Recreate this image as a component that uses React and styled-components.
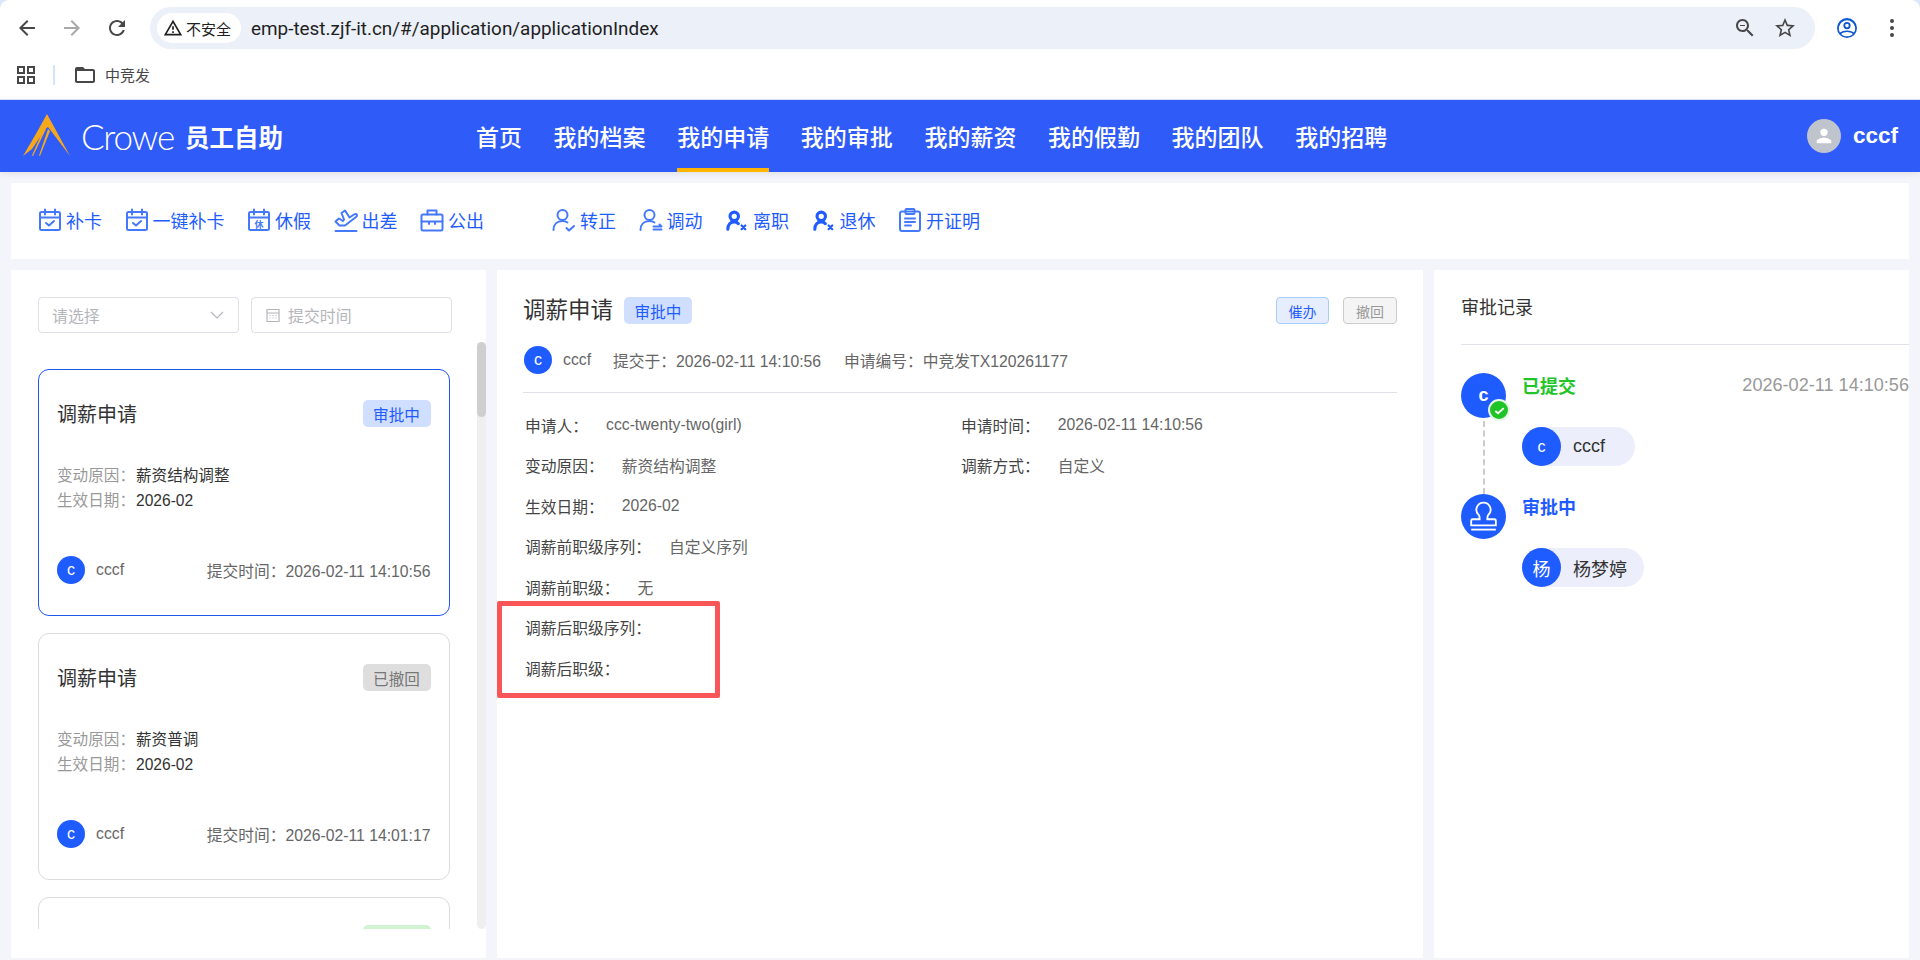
import React from 'react';
import styled, { createGlobalStyle } from 'styled-components';

const GlobalStyle = createGlobalStyle`
  html, body {
    margin: 0;
    padding: 0;
    background: #dde7fb;
  }
  body {
    font-family: "Liberation Sans", "Noto Sans CJK SC", sans-serif;
    color: #333;
  }
  * { box-sizing: border-box; }
`;

const BLUE = '#1f5cff';
const ICON_BLUE = '#4579fb';

const Page = styled.div`
  width: 1920px;
  height: 960px;
  overflow: hidden;
  display: flex;
  flex-direction: column;
`;

const BrowserBar = styled.div`
  height: 50px;
  padding-top: 6px;
  background: #fff;
  border-radius: 9px 9px 0 0;
  display: flex;
  align-items: center;
  flex-shrink: 0;
`;

const NavIcon = styled.span`
  width: 24px;
  height: 24px;
  margin-left: ${(p) => p.$ml}px;
  display: flex;
  color: ${(p) => p.$color || '#474747'};
  flex-shrink: 0;
  svg { width: 24px; height: 24px; fill: currentColor; }
`;

const Omnibox = styled.div`
  width: 1665px;
  height: 42px;
  margin-left: 21px;
  border-radius: 21px;
  background: #ebf0f9;
  display: flex;
  align-items: center;
  padding: 0 18px 0 7px;
`;

const SecurityChip = styled.div`
  width: 84px;
  height: 30px;
  border-radius: 15px;
  background: #fff;
  display: flex;
  align-items: center;
  padding-left: 6px;
  gap: 3px;
  font-size: 15px;
  color: #1f1f1f;
  svg { width: 20px; height: 20px; fill: #1f1f1f; }
`;

const UrlText = styled.div`
  margin-left: 10px;
  font-family: Roboto, "Liberation Sans", sans-serif;
  font-size: 18.9px;
  color: #1f1f1f;
  flex: 1;
`;

const BookmarkBar = styled.div`
  height: 50px;
  background: #fff;
  border-bottom: 1px solid #d9e2f4;
  display: flex;
  align-items: center;
  padding-left: 14px;
  flex-shrink: 0;
  font-size: 15px;
  color: #474747;
`;

const BarSeparator = styled.span`
  width: 2px;
  height: 20px;
  background: #d3e3fd;
  margin: 0 18px 0 15px;
`;

const BookmarkIcon = styled.span`
  display: flex;
  margin-right: 8px;
  svg { width: 24px; height: 24px; fill: #474747; }
`;

const Header = styled.header`
  height: 72px;
  background: #2f5bf8;
  display: flex;
  align-items: center;
  padding: 0 22px 0 23px;
  flex-shrink: 0;
  color: #fff;
  box-shadow: 0 2px 6px rgba(0, 0, 0, 0.08);
  position: relative;
`;

const Brand = styled.div`
  width: 453px;
  display: flex;
  align-items: center;
  svg { width: 47px; height: 42px; margin-top: -2px; }
`;

const BrandName = styled.span`
  font-family: Lato, "Open Sans", sans-serif;
  font-weight: 300;
  font-size: 35px;
  letter-spacing: -1.2px;
  margin-left: 11px;
  line-height: 1;
`;

const BrandTitle = styled.span`
  font-size: 24.5px;
  font-weight: 700;
  margin-left: 11px;
`;

const Nav = styled.nav`
  display: flex;
  gap: 31.6px;
  height: 100%;
`;

const NavItem = styled.a`
  height: 100%;
  display: flex;
  align-items: center;
  font-size: 23px;
  font-weight: 500;
  color: #fff;
  border-bottom: 4px solid ${(p) => (p.$active ? '#ffb400' : 'transparent')};
  padding-top: 4px;
`;

const UserBox = styled.div`
  margin-left: auto;
  display: flex;
  align-items: center;
  gap: 12px;
  font-size: 22.5px;
  font-weight: 700;
`;

const UserAvatar = styled.span`
  width: 34px;
  height: 34px;
  border-radius: 50%;
  background: #c0c4cc;
  display: flex;
  align-items: center;
  justify-content: center;
  svg { width: 22px; height: 22px; fill: #fff; }
`;

const Main = styled.main`
  flex: 1;
  min-height: 0;
  background: #f3f5fa;
  padding: 11px 11px 2px;
  display: flex;
  flex-direction: column;
  gap: 11px;
`;

const ActionBar = styled.div`
  height: 76px;
  padding-bottom: 2px;
  background: #fff;
  display: flex;
  align-items: center;
  padding-left: 28px;
  flex-shrink: 0;
`;

const ActionGroup = styled.div`
  display: flex;
  gap: 23.5px;
  margin-right: ${(p) => p.$mr || 0}px;
`;

const ActionItem = styled.a`
  display: flex;
  align-items: center;
  gap: 5px;
  font-size: 18px;
  color: ${BLUE};
  svg {
    width: 22px;
    height: 22px;
    overflow: visible;
    fill: none;
    stroke: ${ICON_BLUE};
    stroke-width: 2;
    stroke-linecap: round;
    stroke-linejoin: round;
  }
`;

const Columns = styled.div`
  flex: 1;
  min-height: 0;
  display: grid;
  grid-template-columns: 475px 926px 475px;
  gap: 11px;
`;

const ListPanel = styled.section`
  background: #fff;
  padding: 27px 0 0 27px;
  display: flex;
  flex-direction: column;
`;

const Filters = styled.div`
  display: flex;
  gap: 12px;
  width: 414px;
`;

const FilterBox = styled.div`
  width: 201px;
  height: 36px;
  border: 1px solid #dcdfe6;
  border-radius: 4px;
  display: flex;
  align-items: center;
  padding: 0 13px;
  font-size: 15.9px;
  color: #b5b6bc;
  gap: 7px;
  justify-content: ${(p) => (p.$between ? 'space-between' : 'flex-start')};
  svg {
    width: 16px;
    height: 16px;
    fill: none;
    stroke: #b5b6bc;
    stroke-width: 1.2;
    flex-shrink: 0;
  }
`;

const ListArea = styled.div`
  margin-top: 9px;
  height: 587px;
  display: flex;
`;

const CardList = styled.div`
  width: 412px;
  height: 100%;
  overflow: hidden;
  padding-top: 27px;
  display: flex;
  flex-direction: column;
  gap: 17px;
`;

const ScrollTrack = styled.div`
  width: 9px;
  height: 100%;
  margin-left: 27px;
  background: #efefef;
  border-radius: 5px;
`;

const ScrollThumb = styled.div`
  height: 75px;
  background: #cfcfcf;
  border-radius: 5px;
`;

const Card = styled.article`
  height: 247px;
  flex-shrink: 0;
  border: 1px solid ${(p) => (p.$active ? '#1f57ee' : '#dcdcdc')};
  border-radius: 11px;
  padding: ${(p) => (p.$tight ? 27 : 30)}px 18.5px 0 18px;
`;

const CardTop = styled.div`
  display: flex;
  align-items: center;
  justify-content: space-between;
  height: 27px;
`;

const CardTitle = styled.h3`
  margin: 0;
  font-size: 20px;
  font-weight: 400;
  color: #333;
`;

const tagColors = {
  blue: ['#d0deff', BLUE],
  gray: ['#dedede', '#777'],
  green: ['#d2f3d3', '#22c528'],
};

const Tag = styled.span`
  width: 68px;
  height: 27px;
  border-radius: 5px;
  background: ${(p) => tagColors[p.$tone][0]};
  color: ${(p) => tagColors[p.$tone][1]};
  font-size: 15.6px;
  display: flex;
  align-items: center;
  justify-content: center;
`;

const CardInfo = styled.div`
  margin-top: 37px;
  font-size: 15.6px;
  line-height: 24.5px;
`;

const InfoLine = styled.div`
  display: flex;
  color: #999;
  span { color: #333; margin-left: 1px; }
`;

const CardFooter = styled.div`
  margin-top: 43px;
  display: flex;
  align-items: center;
  font-size: 15.75px;
  color: #666;
`;

const Avatar = styled.span`
  width: ${(p) => p.$size || 28}px;
  height: ${(p) => p.$size || 28}px;
  border-radius: 50%;
  background: ${BLUE};
  color: #fff;
  font-size: ${(p) => p.$font || 14}px;
  font-weight: ${(p) => p.$weight || 400};
  display: flex;
  align-items: center;
  justify-content: center;
  flex-shrink: 0;
  position: relative;
`;

const FooterName = styled.span`
  margin-left: 11px;
`;

const FooterTime = styled.span`
  margin-left: auto;
`;

const DetailPanel = styled.section`
  background: #fff;
  padding: 27px 26px 0;
`;

const DetailTop = styled.div`
  display: flex;
  align-items: center;
  height: 27px;
  gap: 11px;
`;

const DetailTitle = styled.h2`
  margin: 0 0 6px;
  font-size: 22.5px;
  font-weight: 400;
  color: #333;
`;

const Actions = styled.div`
  margin-left: auto;
  display: flex;
  gap: 14px;
`;

const SmallButton = styled.button`
  width: ${(p) => (p.$primary ? 53 : 54)}px;
  height: 27px;
  padding: 0;
  border-radius: 4px;
  font-family: inherit;
  font-size: 14px;
  border: 1px solid ${(p) => (p.$primary ? '#a8ceff' : '#ccc')};
  background: ${(p) => (p.$primary ? '#e6edff' : '#f4f4f4')};
  color: ${(p) => (p.$primary ? BLUE : '#999')};
`;

const MetaRow = styled.div`
  margin-top: 22px;
  padding: 0 0 18px 1px;
  border-bottom: 1px solid #dfe1ea;
  display: flex;
  align-items: center;
  font-size: 15.75px;
  color: #666;
`;

const MetaName = styled.span`
  margin-left: 11px;
  margin-right: 22px;
`;

const MetaText = styled.span`
  margin-right: 23px;
`;

const FieldGrid = styled.div`
  margin-top: 12px;
  padding-left: 2px;
  display: grid;
  grid-template-columns: 436px 1fr;
`;

const Field = styled.div`
  height: 40.5px;
  display: flex;
  align-items: center;
  gap: 18px;
  font-size: 15.75px;
  color: #666;
  grid-column: ${(p) => (p.$wide ? '1 / -1' : 'auto')};
`;

const FieldLabel = styled.span`
  color: #444;
`;

const MarkedFields = styled.div`
  grid-column: 1 / -1;
  position: relative;
`;

const RedFrame = styled.div`
  position: absolute;
  left: -28px;
  top: -7px;
  width: 223px;
  height: 97px;
  border: 5px solid #f95757;
  border-radius: 2px;
`;

const RecordPanel = styled.section`
  background: #fff;
  padding-left: 27px;
`;

const RecordHead = styled.div`
  height: 75px;
  border-bottom: 1px solid #e2e2ea;
  display: flex;
  align-items: center;
  padding: 0 0 2px 0;
  font-size: 18px;
  color: #333;
`;

const Timeline = styled.div`
  padding-top: 28px;
`;

const Step = styled.div`
  display: flex;
  gap: 16px;
  min-height: 121px;
`;

const Marker = styled.div`
  width: 45px;
  display: flex;
  flex-direction: column;
  align-items: center;
  flex-shrink: 0;
`;

const DashLine = styled.div`
  flex: 1;
  margin-top: 3px;
  border-left: 2px dashed #ccc;
`;

const CheckBadge = styled.span`
  position: absolute;
  right: -4px;
  bottom: -3px;
  width: 22px;
  height: 22px;
  border-radius: 50%;
  background: #1fc427;
  border: 2px solid #e7f7e8;
  display: flex;
  align-items: center;
  justify-content: center;
  svg { width: 13px; height: 13px; fill: none; stroke: #fff; stroke-width: 2; }
`;

const StampIcon = styled.svg`
  width: 37px;
  height: 37px;
  flex-shrink: 0;
  fill: none;
  stroke: #fff;
  stroke-width: 1.2;
`;

const StepBody = styled.div`
  flex: 1;
  min-width: 0;
`;

const StepHead = styled.div`
  height: 24px;
  display: flex;
  align-items: center;
  justify-content: space-between;
  margin-bottom: 30px;
`;

const StepName = styled.span`
  font-size: 18px;
  font-weight: 700;
  color: ${(p) => p.$color};
`;

const StepTime = styled.span`
  font-size: 18.1px;
  color: #999;
`;

const PersonChip = styled.div`
  display: inline-flex;
  align-items: center;
  height: 39px;
  border-radius: 20px;
  background: #eceffb;
  padding-right: 17px;
`;

const PersonName = styled.span`
  margin-left: 12px;
  min-width: 45px;
  font-size: 18px;
  color: #333;
`;

const CalendarTop = () => (
  <>
    <rect x="2" y="4" width="20" height="18" rx="1.5" />
    <path d="M2 9.5h20M7 1.5v5M17 1.5v5" />
  </>
);

const icons = {
  check: (
    <svg viewBox="1 1 22 22">
      <CalendarTop />
      <path d="M8 15l3 2.5 5-4.5" />
    </svg>
  ),
  leave: (
    <svg viewBox="1 1 22 22">
      <CalendarTop />
      <text x="12" y="19.5" textAnchor="middle" fontSize="9" fontWeight="700" fill={ICON_BLUE} stroke="none">休</text>
    </svg>
  ),
  trip: (
    <svg viewBox="1 1 22 22">
      <path d="M1.5 13.5l3.5-3 4 2.5 1-1.5L7.5 5 11 2.5l4.5 7 4.5-3c2.5-1.5 4 1 2 2.5L11 17.5H5.5z" />
      <path d="M1.5 23h21" />
    </svg>
  ),
  case: (
    <svg viewBox="1 1 22 22">
      <rect x="1.5" y="6.5" width="21" height="16" rx="1.5" />
      <path d="M7.5 6.5V2.5h9v4M1.5 13.5h21M9 13.5v2.5M15 13.5v2.5" />
    </svg>
  ),
  userCheck: (
    <svg viewBox="1 1 22 22">
      <circle cx="10.5" cy="7" r="5" />
      <path d="M1.5 22c0-5.5 3.5-9 9-9 2 0 3.5.5 5 1.5M14.5 20l2.5 2.5 5-4.5" />
    </svg>
  ),
  userMove: (
    <svg viewBox="1 1 22 22">
      <circle cx="10.5" cy="7" r="5" />
      <path d="M1.5 22c0-5.5 3.5-9 9-9 2 0 3.5.5 5 1.5M14.5 18.5h8l-2-2M22.5 21.5h-8" />
    </svg>
  ),
  userOut: (
    <svg viewBox="1 0 24 24" style={{ strokeWidth: 3.4, stroke: '#1f5cff' }}>
      <circle cx="10" cy="8" r="4.6" />
      <path d="M3 22c0-5 3-8 7-8c2 0 3.5.8 4.5 2" />
      <path d="M18 18l4 4M22 18l-4 4" style={{ strokeWidth: 2.4 }} />
    </svg>
  ),
  clip: (
    <svg viewBox="1 1 22 22">
      <rect x="2" y="3.5" width="20" height="19.5" rx="2" />
      <rect x="7.5" y="1" width="9" height="5" rx="1" />
      <path d="M7 10.5h10M7 14h10M7 17.5h6" />
    </svg>
  ),
};

const leftActions = [
  ['check', '补卡'],
  ['check', '一键补卡'],
  ['leave', '休假'],
  ['trip', '出差'],
  ['case', '公出'],
];

const rightActions = [
  ['userCheck', '转正'],
  ['userMove', '调动'],
  ['userOut', '离职'],
  ['userOut', '退休'],
  ['clip', '开证明'],
];

const navItems = ['首页', '我的档案', '我的申请', '我的审批', '我的薪资', '我的假勤', '我的团队', '我的招聘'];

const applications = [
  { tag: '审批中', tone: 'blue', reason: '薪资结构调整', time: '2026-02-11 14:10:56', active: true },
  { tag: '已撤回', tone: 'gray', reason: '薪资普调', time: '2026-02-11 14:01:17' },
  { tag: '已通过', tone: 'green', reason: '薪资普调', time: '2026-02-11 13:52:08', tight: true },
];

const CroweLogo = () => (
  <svg viewBox="0 0 47 42">
    <path fill="#f5a81c" d="M24 0L47 42 28.5 17.5 25 13 22.5 15 9 35 0 42 14 18z" />
    <path fill="#f5a81c" d="M23 15L10 42l-1-.5L21 14z" />
    <path fill="#f5a81c" d="M27 17L17 42l-1-.5L25 15z" />
  </svg>
);

export default function App() {
  return (
    <Page>
      <GlobalStyle />
      <BrowserBar>
        <NavIcon $ml={15}>
          <svg viewBox="0 0 24 24"><path d="M20 11H7.83l5.59-5.59L12 4l-8 8 8 8 1.41-1.41L7.83 13H20v-2z" /></svg>
        </NavIcon>
        <NavIcon $ml={21} $color="#a8a8a8">
          <svg viewBox="0 0 24 24"><path d="M12 4l-1.41 1.41L16.17 11H4v2h12.17l-5.58 5.59L12 20l8-8z" /></svg>
        </NavIcon>
        <NavIcon $ml={21}>
          <svg viewBox="0 0 24 24"><path d="M17.65 6.35C16.2 4.9 14.21 4 12 4c-4.42 0-7.99 3.58-7.99 8s3.57 8 7.99 8c3.73 0 6.84-2.55 7.73-6h-2.08c-.82 2.33-3.04 4-5.65 4-3.31 0-6-2.69-6-6s2.69-6 6-6c1.66 0 3.14.69 4.22 1.78L13 11h7V4l-2.35 2.35z" /></svg>
        </NavIcon>
        <Omnibox>
          <SecurityChip>
            <svg viewBox="0 0 24 24"><path d="M1 21h22L12 2 1 21zm3.47-2L12 5.99 19.53 19H4.47zM11 16h2v2h-2zm0-6h2v4h-2z" /></svg>
            不安全
          </SecurityChip>
          <UrlText>emp-test.zjf-it.cn/#/application/applicationIndex</UrlText>
          <NavIcon $ml={0}>
            <svg viewBox="0 0 24 24"><path d="M15.5 14h-.79l-.28-.27C15.41 12.59 16 11.11 16 9.5 16 5.91 13.09 3 9.5 3S3 5.91 3 9.5 5.91 16 9.5 16c1.61 0 3.09-.59 4.23-1.57l.27.28v.79l5 4.99L20.49 19l-4.99-5zm-6 0C7.01 14 5 11.99 5 9.5S7.01 5 9.5 5 14 7.01 14 9.5 11.99 14 9.5 14zM7 9h5v1H7z" /></svg>
          </NavIcon>
          <NavIcon $ml={16}>
            <svg viewBox="0 0 24 24"><path d="M22 9.24l-7.19-.62L12 2 9.19 8.63 2 9.24l5.46 4.73L5.82 21 12 17.27 18.18 21l-1.63-7.03L22 9.24zM12 15.4l-3.76 2.27 1-4.28-3.32-2.88 4.38-.38L12 6.1l1.71 4.04 4.38.38-3.32 2.88 1 4.28L12 15.4z" /></svg>
          </NavIcon>
        </Omnibox>
        <NavIcon $ml={20} $color="#0b57d0">
          <svg viewBox="0 0 24 24"><path d="M12 2a10 10 0 1 0 0 20 10 10 0 0 0 0-20zm0 18.2c-2.3 0-4.4-.9-5.9-2.3 1.6-1.1 3.7-1.8 5.9-1.8s4.3.7 5.9 1.8c-1.5 1.4-3.6 2.3-5.9 2.3zm7.1-3.6c-1.9-1.4-4.4-2.2-7.1-2.2s-5.2.8-7.1 2.2A8.2 8.2 0 1 1 19.1 16.6zM12 6a3.6 3.6 0 1 0 0 7.2A3.6 3.6 0 0 0 12 6zm0 5.4a1.8 1.8 0 1 1 0-3.6 1.8 1.8 0 0 1 0 3.6z" /></svg>
        </NavIcon>
        <NavIcon $ml={21}>
          <svg viewBox="0 0 24 24"><circle cx="12" cy="5" r="2" /><circle cx="12" cy="12" r="2" /><circle cx="12" cy="19" r="2" /></svg>
        </NavIcon>
      </BrowserBar>
      <BookmarkBar>
        <BookmarkIcon>
          <svg viewBox="0 0 24 24" style={{ marginRight: -8 }}><path d="M3 3h8v8H3V3zm2 2v4h4V5H5zm8-2h8v8h-8V3zm2 2v4h4V5h-4zM3 13h8v8H3v-8zm2 2v4h4v-4H5zm8-2h8v8h-8v-8zm2 2v4h4v-4h-4z" /></svg>
        </BookmarkIcon>
        <BarSeparator />
        <BookmarkIcon>
          <svg viewBox="0 0 24 24"><path d="M20 6h-8l-2-2H4c-1.1 0-1.99.9-1.99 2L2 18c0 1.1.9 2 2 2h16c1.1 0 2-.9 2-2V8c0-1.1-.9-2-2-2zm0 12H4V8h16v10z" /></svg>
        </BookmarkIcon>
        中竞发
      </BookmarkBar>
      <Header>
        <Brand>
          <CroweLogo />
          <BrandName>Crowe</BrandName>
          <BrandTitle>员工自助</BrandTitle>
        </Brand>
        <Nav>
          {navItems.map((item) => (
            <NavItem key={item} $active={item === '我的申请'}>{item}</NavItem>
          ))}
        </Nav>
        <UserBox>
          <UserAvatar>
            <svg viewBox="0 0 24 24"><path d="M12 12a4 4 0 1 0 0-8 4 4 0 0 0 0 8zm0 2c-2.7 0-8 1.3-8 4v2h16v-2c0-2.7-5.3-4-8-4z" /></svg>
          </UserAvatar>
          cccf
        </UserBox>
      </Header>
      <Main>
        <ActionBar>
          <ActionGroup $mr={69}>
            {leftActions.map(([icon, label]) => (
              <ActionItem key={label}>{icons[icon]}{label}</ActionItem>
            ))}
          </ActionGroup>
          <ActionGroup>
            {rightActions.map(([icon, label]) => (
              <ActionItem key={label}>{icons[icon]}{label}</ActionItem>
            ))}
          </ActionGroup>
        </ActionBar>
        <Columns>
          <ListPanel>
            <Filters>
              <FilterBox $between>
                请选择
                <svg viewBox="0 0 16 16"><path d="M2 5l6 6 6-6" /></svg>
              </FilterBox>
              <FilterBox>
                <svg viewBox="0 0 16 16"><path d="M2 2.5h12v12H2zM2 6h12M4.5 8.5h1M7.5 8.5h1M10.5 8.5h1M4.5 11h1M7.5 11h1M10.5 11h1" /></svg>
                提交时间
              </FilterBox>
            </Filters>
            <ListArea>
              <CardList>
                {applications.map((app) => (
                  <Card key={app.time} $active={app.active} $tight={app.tight}>
                    <CardTop>
                      <CardTitle>调薪申请</CardTitle>
                      <Tag $tone={app.tone}>{app.tag}</Tag>
                    </CardTop>
                    <CardInfo>
                      <InfoLine>变动原因：<span>{app.reason}</span></InfoLine>
                      <InfoLine>生效日期：<span>2026-02</span></InfoLine>
                    </CardInfo>
                    <CardFooter>
                      <Avatar $size={28} $font={16}>c</Avatar>
                      <FooterName>cccf</FooterName>
                      <FooterTime>提交时间：{app.time}</FooterTime>
                    </CardFooter>
                  </Card>
                ))}
              </CardList>
              <ScrollTrack><ScrollThumb /></ScrollTrack>
            </ListArea>
          </ListPanel>

          <DetailPanel>
            <DetailTop>
              <DetailTitle>调薪申请</DetailTitle>
              <Tag $tone="blue">审批中</Tag>
              <Actions>
                <SmallButton $primary>催办</SmallButton>
                <SmallButton>撤回</SmallButton>
              </Actions>
            </DetailTop>
            <MetaRow>
              <Avatar $size={28} $font={16}>c</Avatar>
              <MetaName>cccf</MetaName>
              <MetaText>提交于：2026-02-11 14:10:56</MetaText>
              <span>申请编号：中竞发TX120261177</span>
            </MetaRow>
            <FieldGrid>
              <Field><FieldLabel>申请人：</FieldLabel>ccc-twenty-two(girl)</Field>
              <Field><FieldLabel>申请时间：</FieldLabel>2026-02-11 14:10:56</Field>
              <Field><FieldLabel>变动原因：</FieldLabel>薪资结构调整</Field>
              <Field><FieldLabel>调薪方式：</FieldLabel>自定义</Field>
              <Field $wide><FieldLabel>生效日期：</FieldLabel>2026-02</Field>
              <Field $wide><FieldLabel>调薪前职级序列：</FieldLabel>自定义序列</Field>
              <Field $wide><FieldLabel>调薪前职级：</FieldLabel>无</Field>
              <MarkedFields>
                <Field><FieldLabel>调薪后职级序列：</FieldLabel></Field>
                <Field><FieldLabel>调薪后职级：</FieldLabel></Field>
                <RedFrame />
              </MarkedFields>
            </FieldGrid>
          </DetailPanel>

          <RecordPanel>
            <RecordHead>审批记录</RecordHead>
            <Timeline>
              <Step>
                <Marker>
                  <Avatar $size={45} $font={18} $weight={700}>
                    c
                    <CheckBadge>
                      <svg viewBox="0 0 14 14"><path d="M2.5 7.5l3 2.5 6-5.5" /></svg>
                    </CheckBadge>
                  </Avatar>
                  <DashLine />
                </Marker>
                <StepBody>
                  <StepHead>
                    <StepName $color="#22c528">已提交</StepName>
                    <StepTime>2026-02-11 14:10:56</StepTime>
                  </StepHead>
                  <PersonChip>
                    <Avatar $size={39} $font={16}>c</Avatar>
                    <PersonName>cccf</PersonName>
                  </PersonChip>
                </StepBody>
              </Step>
              <Step>
                <Marker>
                  <Avatar $size={45}>
                    <StampIcon viewBox="0 0 24 24">
                      <path d="M12 3a4.6 4.6 0 0 0-3.1 8c.7.7.6 1.8.6 2.8H5a1 1 0 0 0-1 1v3h16v-3a1 1 0 0 0-1-1h-4.5c0-1-.1-2.1.6-2.8A4.6 4.6 0 0 0 12 3z" />
                      <path d="M4 20.5h16" />
                    </StampIcon>
                  </Avatar>
                </Marker>
                <StepBody>
                  <StepHead>
                    <StepName $color={BLUE}>审批中</StepName>
                  </StepHead>
                  <PersonChip>
                    <Avatar $size={39} $font={18}>杨</Avatar>
                    <PersonName>杨梦婷</PersonName>
                  </PersonChip>
                </StepBody>
              </Step>
            </Timeline>
          </RecordPanel>
        </Columns>
      </Main>
    </Page>
  );
}
